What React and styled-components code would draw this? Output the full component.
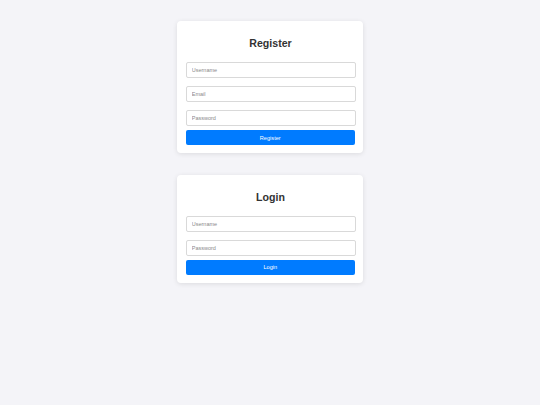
import React from "react";
import styled, { createGlobalStyle } from "styled-components";

const Global = createGlobalStyle`
  html, body { margin: 0; padding: 0; background: #f4f4f8; }
  body { font-family: "Liberation Sans", Arial, sans-serif; }
  * { box-sizing: border-box; }
`;

const Page = styled.div`
  min-height: 405px;
  background: #f4f4f8;
  display: flex;
  flex-direction: column;
  align-items: center;
  padding-top: 21px;
  gap: 21.5px;
  padding-left: 0.5px;
`;

const Card = styled.div`
  width: 186px;
  background: #ffffff;
  border-radius: 4px;
  box-shadow: 0 1px 5px rgba(0, 0, 0, 0.1);
  padding: 8px 8px 8px 8.5px;
`;

const Title = styled.h2`
  margin: 7px 0 12.3px;
  font-size: 10.6px;
  line-height: 14px;
  font-weight: bold;
  color: #333333;
  text-align: center;
`;

const Form = styled.form`
  display: flex;
  flex-direction: column;
  gap: 4.3px;
  margin: 0;
`;

const Input = styled.input`
  height: 15.5px;
  width: 170px;
  margin: 0 0 4.3px;
  padding: 0 5px;
  border: 1px solid #d9d9d9;
  border-radius: 2px;
  font-family: "Liberation Sans", Arial, sans-serif;
  font-size: 5.5px;
  color: #333;
  background: #fff;
  outline: none;
  &::placeholder { color: #8a8a8a; }
  &:last-of-type { margin-bottom: 0; }
`;

const Button = styled.button`
  height: 15px;
  width: 169px;
  border: none;
  border-radius: 2px;
  background: #007bff;
  color: #ffffff;
  font-family: "Liberation Sans", Arial, sans-serif;
  font-size: 5.6px;
  padding: 0;
  cursor: pointer;
`;

const AuthCard = ({ title, fields, action }) => (
  <Card>
    <Title>{title}</Title>
    <Form onSubmit={(e) => e.preventDefault()}>
      {fields.map((f) => (
        <Input key={f.name} type={f.type} placeholder={f.name} />
      ))}
      <Button type="submit">{action}</Button>
    </Form>
  </Card>
);

export default function App() {
  return (
    <>
      <Global />
      <Page>
        <AuthCard
          title="Register"
          action="Register"
          fields={[
            { name: "Username", type: "text" },
            { name: "Email", type: "email" },
            { name: "Password", type: "password" },
          ]}
        />
        <AuthCard
          title="Login"
          action="Login"
          fields={[
            { name: "Username", type: "text" },
            { name: "Password", type: "password" },
          ]}
        />
      </Page>
    </>
  );
}
